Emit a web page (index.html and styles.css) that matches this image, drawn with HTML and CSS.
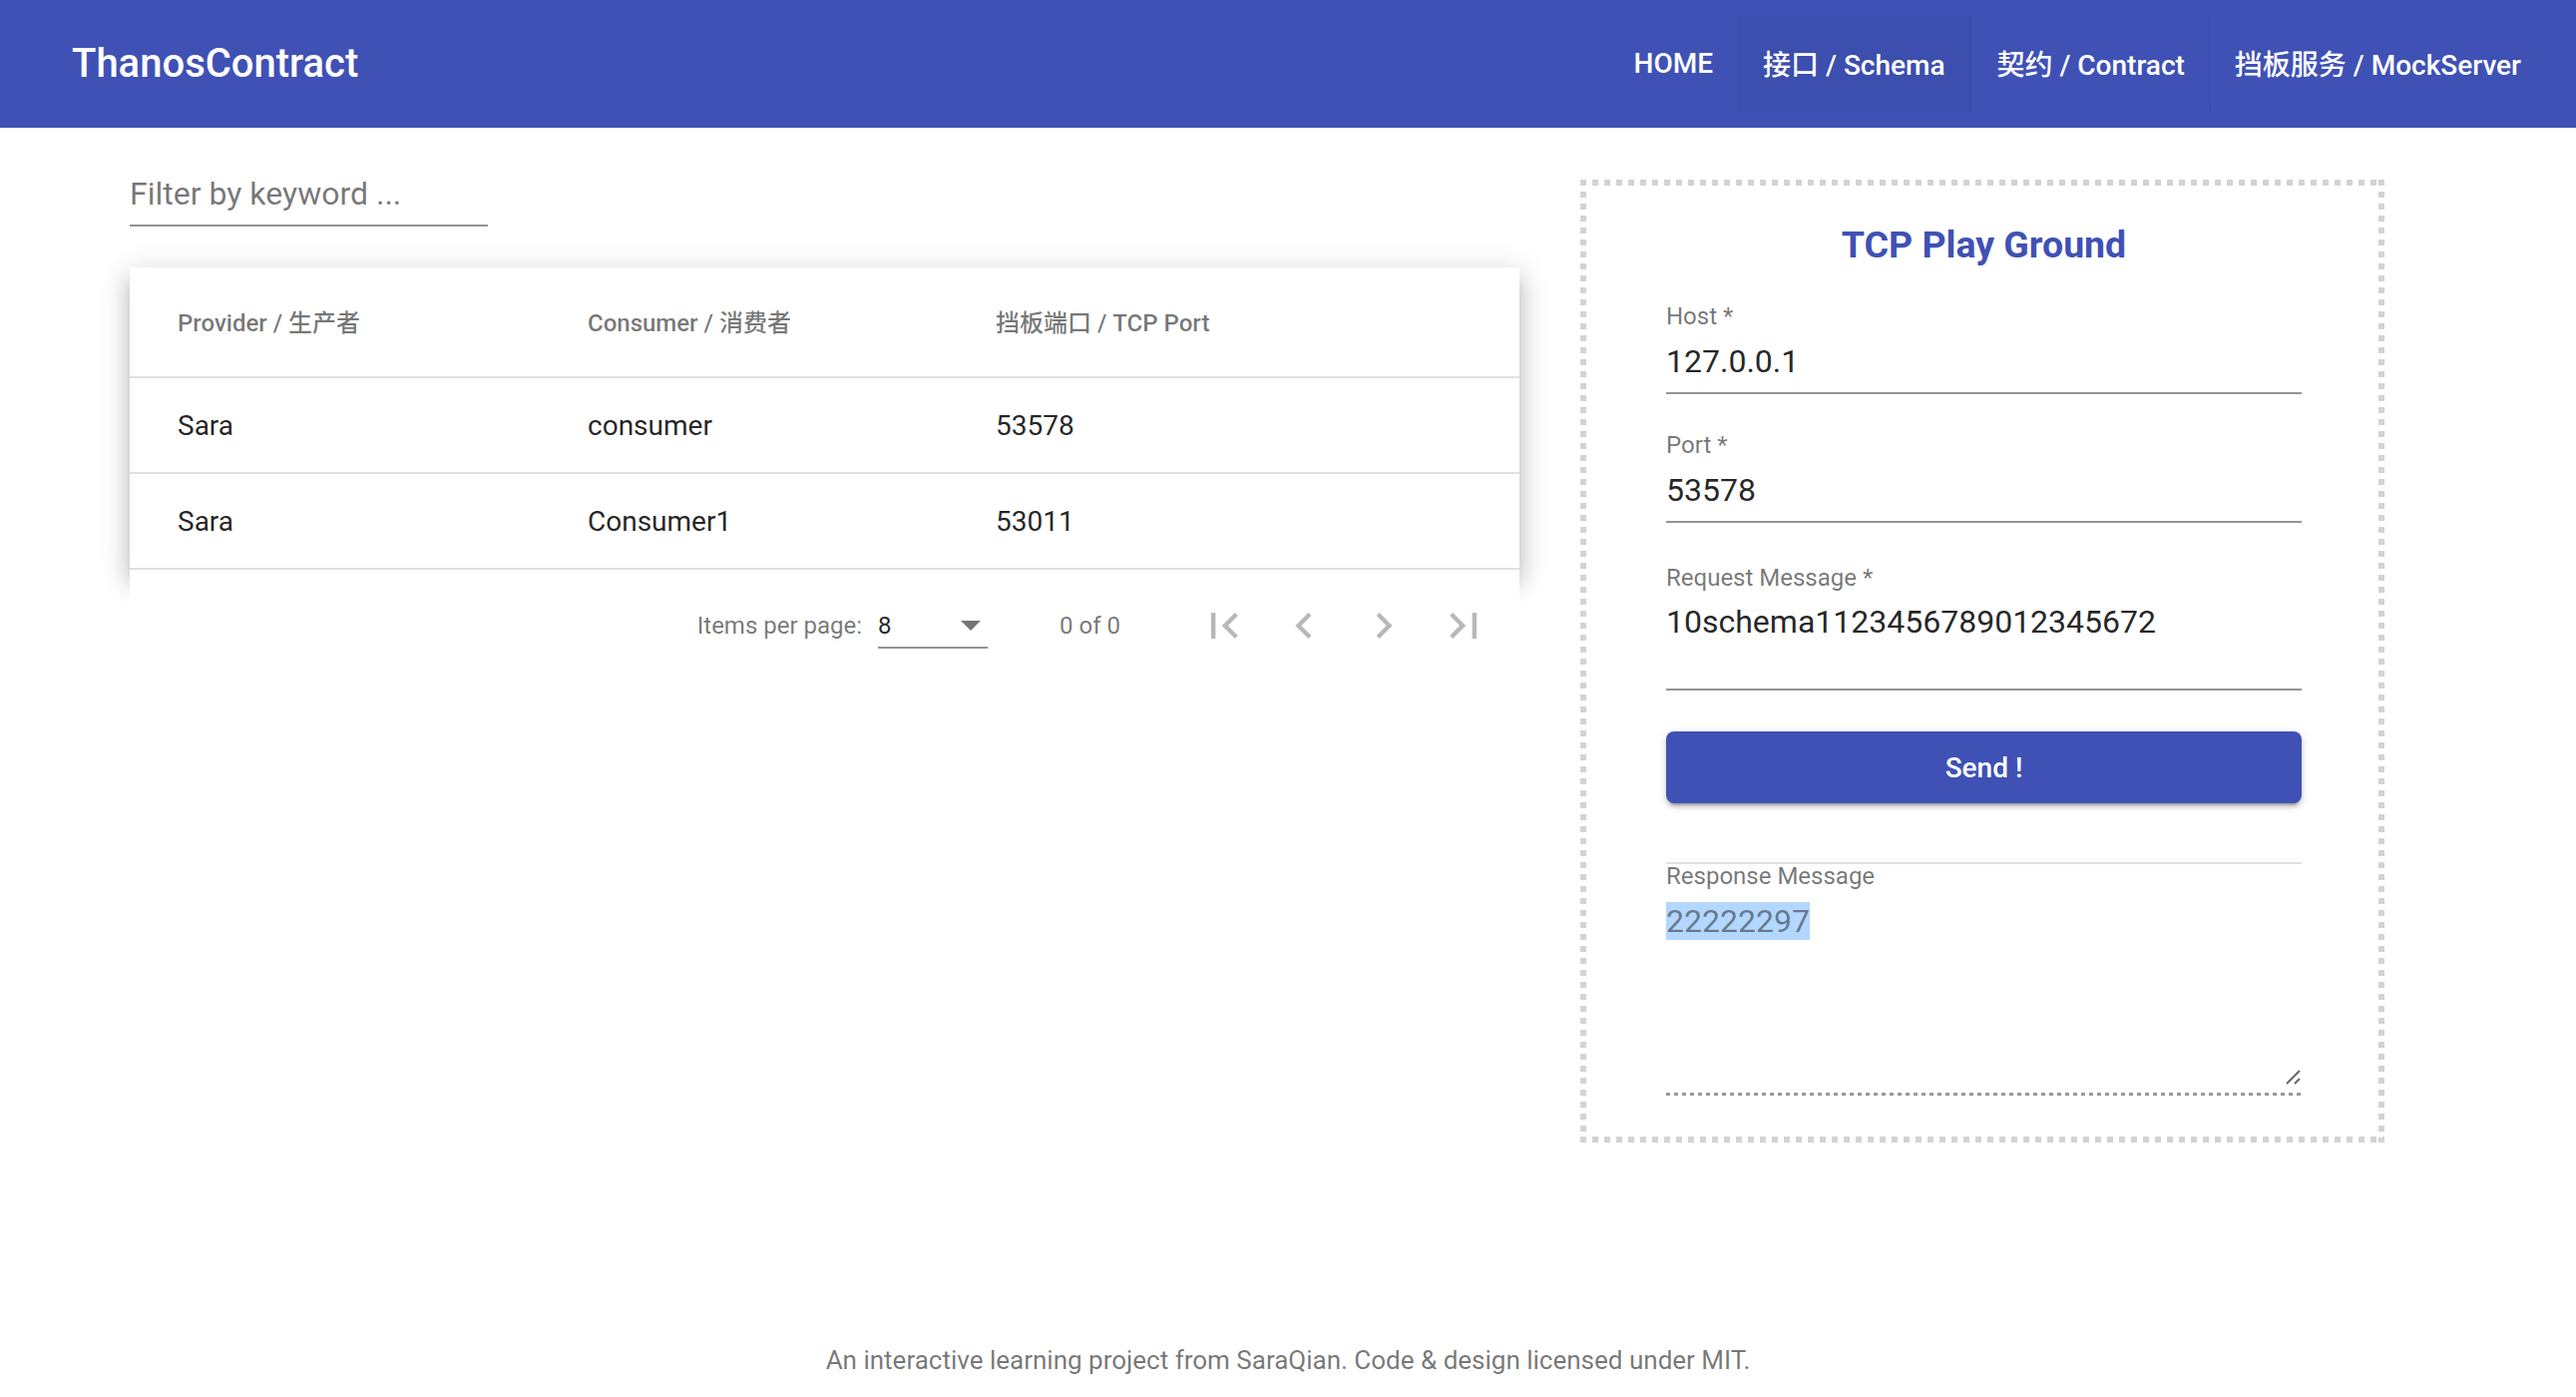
FILE: index.html
```html
<!DOCTYPE html>
<html lang="zh">
<head>
<meta charset="utf-8">
<title>ThanosContract</title>
<link rel="stylesheet" href="styles.css">
</head>
<body>
<header class="toolbar">
  <div class="brand">ThanosContract</div>
  <nav class="nav">
    <a class="nav-link">HOME</a>
    <a class="nav-link active">接口 / Schema</a>
    <a class="nav-link">契约 / Contract</a>
    <a class="nav-link sep">挡板服务 / MockServer</a>
  </nav>
</header>

<main class="main">
  <section class="list">
    <div class="filter"><span class="placeholder">Filter by keyword ...</span></div>
    <div class="table">
      <div class="row head">
        <div class="cell">Provider / 生产者</div>
        <div class="cell">Consumer / 消费者</div>
        <div class="cell">挡板端口 / TCP Port</div>
      </div>
      <div class="row data">
        <div class="cell">Sara</div>
        <div class="cell">consumer</div>
        <div class="cell">53578</div>
      </div>
      <div class="row data">
        <div class="cell">Sara</div>
        <div class="cell">Consumer1</div>
        <div class="cell">53011</div>
      </div>
    </div>
    <div class="paginator">
      <span class="pg-label">Items per page:</span>
      <div class="pg-select"><span class="pg-val">8</span><span class="pg-arrow"></span></div>
      <span class="pg-range">0 of 0</span>
      <div class="pg-buttons">
        <span class="pg-btn"><svg viewBox="0 0 24 24" class="pg-icon"><path d="M18.41 16.59L13.82 12l4.59-4.59L17 6l-6 6 6 6zM6 6h2v12H6z"/></svg></span>
        <span class="pg-btn"><svg viewBox="0 0 24 24" class="pg-icon"><path d="M15.41 7.41L14 6l-6 6 6 6 1.41-1.41L10.83 12z"/></svg></span>
        <span class="pg-btn"><svg viewBox="0 0 24 24" class="pg-icon"><path d="M10 6L8.59 7.41 13.17 12l-4.58 4.59L10 18l6-6z"/></svg></span>
        <span class="pg-btn"><svg viewBox="0 0 24 24" class="pg-icon"><path d="M5.59 7.41L10.18 12l-4.59 4.59L7 18l6-6-6-6zM16 6h2v12h-2z"/></svg></span>
      </div>
    </div>
  </section>

  <section class="playground">
    <div class="pg-title">TCP Play Ground</div>
    <div class="field f-host">
      <div class="label">Host *</div>
      <div class="value">127.0.0.1</div>
    </div>
    <div class="field f-port">
      <div class="label">Port *</div>
      <div class="value">53578</div>
    </div>
    <div class="field f-req">
      <div class="label">Request Message *</div>
      <div class="value">10schema1123456789012345672</div>
    </div>
    <button class="send">Send !</button>
    <div class="response">
      <div class="resp-label">Response Message</div>
      <div class="resp-area">
        <span class="resp-sel">22222297</span>
        <svg class="grip" viewBox="0 0 16 16"><path d="M15 1L2 14M15 9L10 14" stroke="#666" stroke-width="2" fill="none"/></svg>
      </div>
    </div>
  </section>
</main>

<footer class="footer">An interactive learning project from SaraQian. Code &amp; design licensed under MIT.</footer>
</body>
</html>
```

FILE: styles.css
```css
* { box-sizing: border-box; }
html, body { margin: 0; padding: 0; background: #fff; }
body {
  font-family: Roboto, "Noto Sans CJK SC", sans-serif;
  width: 2582px;
  height: 1400px;
  overflow: hidden;
}

/* Toolbar */
.toolbar {
  height: 128px;
  background: #3f51b5;
  color: #fff;
  display: flex;
  align-items: center;
  padding: 0 31px 0 72px;
}
.brand { font-weight: 500; font-size: 40px; line-height: 48px; }
.nav { margin-left: auto; display: flex; align-items: center; }
.nav-link {
  height: 96px;
  padding: 0 24px 2px;
  display: flex;
  align-items: center;
  font-weight: 500;
  font-size: 28px;
  color: #fff;
  border-left: 2px solid transparent;
}
.nav-link.active {
  background: #3c4eae;
  border-left: 2px solid #3b4caa;
  border-right: 2px solid #3b4caa;
}
.nav-link.sep { border-left: 2px solid #3b4caa; }

/* Main */
.main {
  display: flex;
  align-items: flex-start;
  padding: 47px 0 0 130px;
}
.list { width: 1393px; }

.filter {
  width: 359px;
  padding-bottom: 12px;
  border-bottom: 2px solid rgba(0,0,0,.42);
}
.placeholder {
  display: block;
  font-size: 32px;
  line-height: 38px;
  color: rgba(0,0,0,.54);
}

.table {
  margin-top: 41px;
  background: #fff;
  box-shadow: 0 10px 10px -6px rgba(0,0,0,.2), 0 16px 20px 2px rgba(0,0,0,.14), 0 6px 28px 4px rgba(0,0,0,.12);
}
.row {
  display: grid;
  grid-template-columns: 411px 409px 1fr;
  align-items: center;
  padding: 0 48px;
  border-bottom: 2px solid rgba(0,0,0,.12);
}
.row.head {
  height: 111px;
  padding-bottom: 2px;
  font-weight: 500;
  font-size: 24px;
  color: rgba(0,0,0,.54);
}
.row.data {
  height: 96px;
  font-size: 28px;
  color: rgba(0,0,0,.87);
}

/* Paginator */
.paginator {
  height: 112px;
  display: flex;
  align-items: center;
  justify-content: flex-end;
  padding-right: 16px;
  background: #fff;
  font-size: 24px;
  color: rgba(0,0,0,.54);
}
.pg-label { margin-right: 16px; }
.pg-select {
  width: 110px;
  margin-top: 8px;
  padding-bottom: 6px;
  border-bottom: 2px solid rgba(0,0,0,.42);
  display: flex;
  align-items: center;
  justify-content: space-between;
  height: 38px;
}
.pg-val { color: rgba(0,0,0,.87); line-height: 30px; }
.pg-arrow {
  width: 0; height: 0;
  border-left: 10px solid transparent;
  border-right: 10px solid transparent;
  border-top: 10px solid rgba(0,0,0,.54);
  margin-right: 7px;
}
.pg-range { margin-left: 72px; }
.pg-buttons { display: flex; margin-left: 64px; }
.pg-btn {
  width: 80px;
  height: 80px;
  display: flex;
  align-items: center;
  justify-content: center;
}
.pg-icon { width: 52px; height: 52px; fill: #b8b8b8; }

/* Playground: square-dotted frame */
.playground {
  width: 806px;
  margin-left: 61px;
  margin-top: 5px;
  padding: 43px 83px 47px 86px;
  background:
    linear-gradient(to right, #d3d3d3 50%, transparent 50%) left top / 12px 6px repeat-x,
    linear-gradient(to right, #d3d3d3 50%, transparent 50%) left bottom / 12px 6px repeat-x,
    linear-gradient(to bottom, #d3d3d3 50%, transparent 50%) left top / 6px 12px repeat-y,
    linear-gradient(to bottom, #d3d3d3 50%, transparent 50%) right top / 6px 12px repeat-y;
}
.pg-title {
  text-align: center;
  font-weight: 700;
  font-size: 37.44px;
  line-height: 44px;
  color: #3f51b5;
  margin-bottom: 35px;
}
.field .label {
  font-size: 24px;
  line-height: 30px;
  color: rgba(0,0,0,.54);
}
.field .value {
  font-size: 32px;
  line-height: 38px;
  color: rgba(0,0,0,.87);
  margin-top: 11px;
  padding-bottom: 12px;
  border-bottom: 2px solid rgba(0,0,0,.42);
}
.f-port { margin-top: 36px; }
.f-req { margin-top: 40px; }
.f-req .value { margin-top: 10px; padding-bottom: 48px; }

.send {
  display: block;
  width: 100%;
  height: 72px;
  margin-top: 41px;
  border: 0;
  border-radius: 8px;
  background: #3f51b5;
  color: #fff;
  font-family: Roboto, sans-serif;
  font-weight: 500;
  font-size: 28px;
  box-shadow: 0 6px 2px -4px rgba(0,0,0,.2), 0 4px 4px 0 rgba(0,0,0,.14), 0 2px 10px 0 rgba(0,0,0,.12);
}

.response {
  margin-top: 59px;
  border-top: 2px solid #e0e0e0;
}
.resp-label {
  font-size: 24px;
  line-height: 24px;
  color: rgba(0,0,0,.54);
}
.resp-area {
  position: relative;
  margin-top: 14px;
  height: 194px;
  font-size: 32px;
  line-height: 38px;
  background-image: linear-gradient(to right, rgba(0,0,0,.4) 0, rgba(0,0,0,.4) 50%, transparent 0);
  background-size: 8px 3px;
  background-repeat: repeat-x;
  background-position: 0 bottom;
}
.resp-sel { background: #b3d7fe; color: rgba(0,0,0,.45); }
.grip {
  position: absolute;
  right: 1px;
  bottom: 10px;
  width: 16px;
  height: 16px;
}

.footer {
  margin-top: 203px;
  text-align: center;
  font-size: 26px;
  line-height: 30px;
  color: rgba(0,0,0,.54);
}
```
